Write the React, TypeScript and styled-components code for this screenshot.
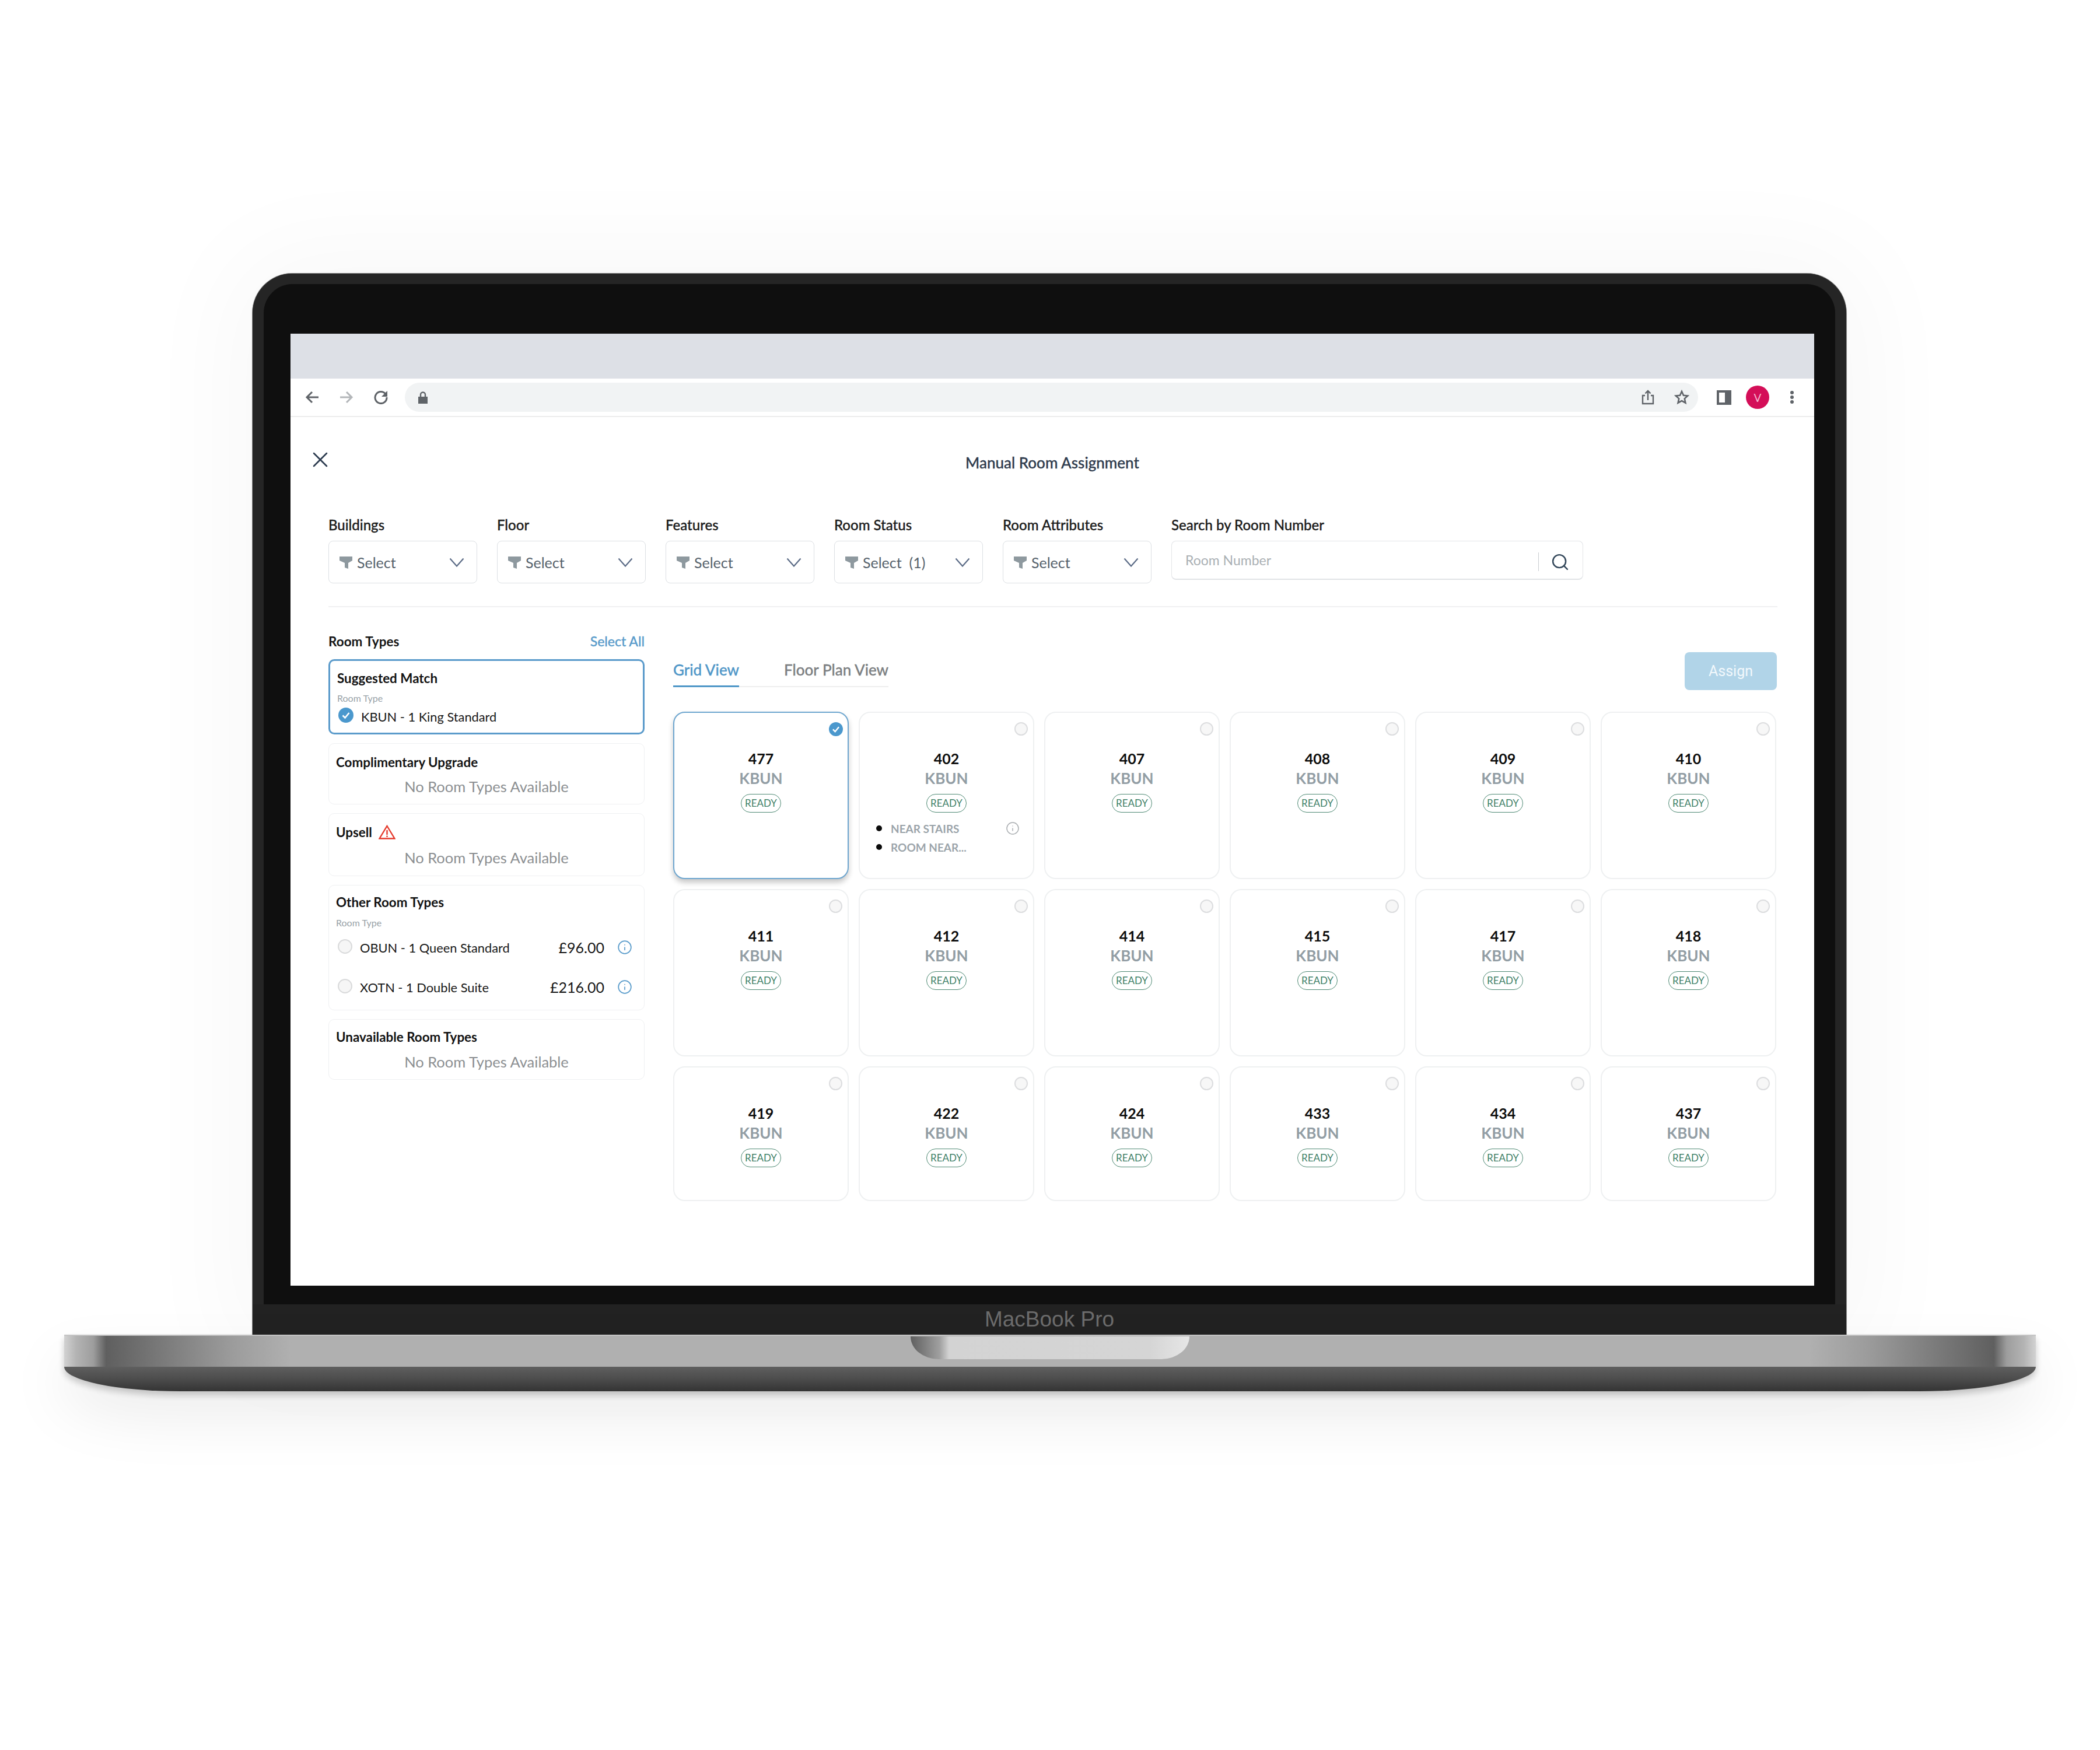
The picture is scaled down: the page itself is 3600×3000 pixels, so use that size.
import React from "react";
import styled, { createGlobalStyle } from "styled-components";
import { Info, Search, X } from "lucide-react";

const Global = createGlobalStyle`
  html, body { margin: 0; padding: 0; background: #fff; }
  * { box-sizing: border-box; }
  body { font-family: Lato, "Open Sans", "Liberation Sans", sans-serif; }
`;

const Page = styled.div`
  width: 3600px;
  height: 3000px;
  padding-top: 469px;
  display: flex;
  flex-direction: column;
  align-items: center;
  background: #fff;
  overflow: hidden;
`;

const Lid = styled.div`
  width: 2732px;
  height: 1819px;
  margin-left: -2px;
  display: flex;
  flex-direction: column;
  border-radius: 68px 68px 0 0;
  background: #252525;
  box-shadow: 0 0 0 1px #8d8d8d, 0 0 180px 40px rgba(0, 0, 0, 0.03);
`;

const Bezel = styled.div`
  flex: 1;
  min-height: 0;
  display: flex;
  padding: 85px 36px 32px 46px;
  background: #0f0f0f;
  border: solid #252525;
  border-width: 18px 19px 0 19px;
  border-radius: 68px 68px 0 0;
`;

const Chin = styled.div`
  height: 52px;
  display: flex;
  align-items: center;
  justify-content: center;
  background: #222;
`;

const ChinLabel = styled.span`
  font-family: "Liberation Sans", Arial, sans-serif;
  font-size: 37px;
  color: #6c6c6c;
`;

const Base = styled.div`
  width: 3380px;
  display: flex;
  flex-direction: column;
  filter: drop-shadow(0 7px 6px rgba(0, 0, 0, 0.2)) drop-shadow(0 45px 45px rgba(0, 0, 0, 0.07));
`;

const BaseTop = styled.div`
  height: 55px;
  display: flex;
  justify-content: center;
  border-top: 2px solid #c4c4c4;
  background: linear-gradient(
    90deg,
    #d2d2d2 0,
    #b4b4b4 20px,
    #9d9d9d 50px,
    #5f5f5f 72px,
    #808080 190px,
    #9c9c9c 290px,
    #b0b0b0 390px,
    #b0b0b0 2990px,
    #9c9c9c 3090px,
    #808080 3190px,
    #5f5f5f 3308px,
    #9d9d9d 3330px,
    #b4b4b4 3360px,
    #d2d2d2 3380px
  );
`;

const Notch = styled.div`
  width: 478px;
  height: 39px;
  margin-top: 1px;
  border-radius: 0 0 48px 48px / 0 0 39px 39px;
  background: linear-gradient(90deg, #5f5f5f 0, #a0a0a0 50px, #d3d3d3 66px, #d5d5d5 410px, #e6e6e6 478px);
`;

const BaseBottom = styled.div`
  height: 42px;
  border-radius: 0 0 200px 200px / 0 0 42px 42px;
  background: linear-gradient(180deg, #5f5f5f 0, #4c4c4c 50%, #343434 100%);
`;

const Screen = styled.div`
  flex: 1;
  min-width: 0;
  display: flex;
  flex-direction: column;
  background: #fff;
  overflow: hidden;
`;

const TabStrip = styled.div`
  height: 77px;
  background: #dde0e6;
`;

const Toolbar = styled.div`
  height: 66px;
  display: flex;
  align-items: center;
  padding: 0 0 0 25px;
  border-bottom: 2px solid #ececec;
`;

const NavIcon = styled.svg`
  width: 24px;
  height: 24px;
  flex: none;
  margin-right: 35px;
`;

const Omnibox = styled.div`
  width: 2217px;
  height: 50px;
  margin: 0 32px 0 -6px;
  padding: 0 15px 0 18px;
  display: flex;
  align-items: center;
  border-radius: 25px;
  background: #f1f3f4;
`;

const OmniIcon = styled.svg<{ $gap?: number }>`
  width: 26px;
  height: 26px;
  flex: none;
  margin-right: ${(p) => p.$gap ?? 0}px;
`;

const Spacer = styled.div`
  flex: 1;
`;

const SidePanel = styled.div`
  width: 25px;
  height: 25px;
  border: 4px solid #5f6368;
  border-right-width: 11px;
  background: #fff;
  margin-right: 25px;
`;

const Avatar = styled.div`
  width: 40px;
  height: 40px;
  display: flex;
  align-items: center;
  justify-content: center;
  border-radius: 50%;
  background: #d40e58;
  color: #f6b6cf;
  font-size: 19px;
  margin-right: 36px;
`;

const Dots = styled.div`
  display: flex;
  flex-direction: column;
  gap: 2px;
`;

const Dot = styled.span`
  width: 6px;
  height: 6px;
  border-radius: 50%;
  background: #5f6368;
`;

const Header = styled.div`
  height: 173px;
  display: grid;
  grid-template-columns: 1fr auto 1fr;
  align-items: start;
  padding: 0 40px;
`;

const CloseButton = styled(X)`
  margin: 51px 0 0 -11px;
  color: #2b3a4e;
`;

const Title = styled.h1`
  margin: 63px 0 0;
  font-size: 26px;
  line-height: 30px;
  font-weight: 500;
  color: #2f3b4d;
  -webkit-text-stroke: 0.3px #2f3b4d;
`;

const Main = styled.div`
  padding: 0 63px 0 65px;
`;

const Filters = styled.div`
  display: flex;
  gap: 34px;
  padding-bottom: 39px;
  border-bottom: 2px solid #f0f1f2;
`;

const Field = styled.div`
  display: flex;
  flex-direction: column;
  gap: 15px;
`;

const FieldLabel = styled.label`
  font-size: 24px;
  line-height: 24px;
  font-weight: 500;
  color: #1c1c1c;
  -webkit-text-stroke: 0.3px #1c1c1c;
`;

const SelectBox = styled.div`
  width: 255px;
  height: 73px;
  display: flex;
  align-items: center;
  padding: 0 21px 0 18px;
  border: 1px solid #dcdfe3;
  border-radius: 8px;
  background: #fff;
`;

const FunnelIcon = styled.svg`
  width: 22px;
  height: 24px;
  flex: none;
  margin-right: 8px;
`;

const SelectText = styled.span`
  flex: 1;
  font-size: 25px;
  color: #56626c;
  white-space: pre;
`;

const ChevronIcon = styled.svg`
  width: 26px;
  height: 16px;
  flex: none;
`;

const SearchBox = styled.div`
  width: 706px;
  height: 67px;
  display: flex;
  align-items: center;
  padding: 0 22px 0 23px;
  border: 1px solid #e3e5e8;
  border-bottom: 2px solid #e1e3e6;
  border-radius: 8px;
`;

const Placeholder = styled.span`
  flex: 1;
  font-size: 23px;
  color: #aab0b4;
`;

const SearchDivider = styled.span`
  width: 1px;
  height: 32px;
  margin: 6px 20px 0 0;
  background: #c9cdd0;
`;

const SearchIcon = styled(Search)`
  flex: none;
  margin-top: 6px;
  color: #33475a;
`;

const Body = styled.div`
  display: flex;
  gap: 49px;
  padding-top: 46px;
`;

const Sidebar = styled.div`
  width: 542px;
  flex: none;
  display: flex;
  flex-direction: column;
`;

const SidebarHead = styled.div`
  display: flex;
  justify-content: space-between;
  align-items: center;
  height: 24px;
  margin-bottom: 19px;
`;

const SidebarTitle = styled.span`
  font-size: 22.500px;
  font-weight: 700;
  color: #161616;
`;

const SelectAll = styled.span`
  font-size: 23px;
  font-weight: 500;
  color: #5a9ccb;
  -webkit-text-stroke: 0.3px #5a9ccb;
`;

const Groups = styled.div`
  display: flex;
  flex-direction: column;
  gap: 15px;
`;

const Group = styled.div<{ $height: number; $top: number; $active?: boolean }>`
  height: ${(p) => p.$height}px;
  padding: ${(p) => p.$top}px 12px 0;
  border: ${(p) => (p.$active ? "3px solid #5b9bcb" : "1px solid #eff0f2")};
  border-radius: 10px;
  background: #fff;
`;

const GroupTitle = styled.div<{ $gap?: number }>`
  display: flex;
  align-items: center;
  gap: 11px;
  height: 28px;
  margin-bottom: ${(p) => p.$gap ?? 12}px;
  font-size: 22.400px;
  font-weight: 700;
  color: #121212;
`;

const Message = styled.div`
  height: 32px;
  line-height: 32px;
  text-align: center;
  font-size: 25.500px;
  color: #8c8f92;
`;

const SmallLabel = styled.div`
  height: 20px;
  line-height: 20px;
  font-size: 16px;
  color: #98a2a8;
`;

const OptionRow = styled.div<{ $top: number }>`
  display: flex;
  align-items: center;
  height: 30px;
  margin-top: ${(p) => p.$top}px;
  font-size: 21.800px;
  color: #181818;
`;

const CheckIcon = styled.svg`
  width: 26px;
  height: 26px;
  flex: none;
  margin: -4px 13px 0 2px;
`;

const ListRadio = styled.span`
  width: 25px;
  height: 25px;
  flex: none;
  margin: -4px 13px 0 3px;
  border-radius: 50%;
  border: 2px solid #d9dadb;
  background: #f6f6f6;
`;

const Price = styled.span`
  margin-left: auto;
  font-size: 25px;
`;

const PriceInfo = styled(Info)`
  flex: none;
  margin: 0 8px 0 22px;
  color: #5a9ccb;
`;

const Content = styled.div`
  flex: 1;
  min-width: 0;
  margin-top: 31px;
`;

const ContentHead = styled.div`
  display: flex;
  justify-content: space-between;
  align-items: flex-start;
  padding-right: 1px;
`;

const Tabs = styled.div`
  display: flex;
  gap: 77px;
  border-bottom: 2px solid #eeeeee;
  padding-top: 15px;
`;

const Tab = styled.div<{ $active?: boolean }>`
  height: 45px;
  line-height: 30px;
  margin-bottom: -2px;
  font-size: 26px;
  font-weight: 500;
  color: ${(p) => (p.$active ? "#5097c8" : "#7c7f82")};
  -webkit-text-stroke: 0.3px ${(p) => (p.$active ? "#5097c8" : "#7c7f82")};
  border-bottom: ${(p) => (p.$active ? "3px solid #5097c8" : "none")};
`;

const AssignButton = styled.button`
  width: 158px;
  height: 65px;
  border: none;
  border-radius: 8px;
  background: #b1d4e8;
  color: #f2f8fc;
  font-family: Roboto, "Liberation Sans", sans-serif;
  font-size: 25px;
`;

const RoomGrid = styled.div`
  display: grid;
  grid-template-columns: repeat(6, 301px);
  grid-template-rows: 287px 287px 231px;
  gap: 17px;
  margin-top: 37px;
`;

const RoomCard = styled.div<{ $selected?: boolean }>`
  position: relative;
  display: flex;
  flex-direction: column;
  align-items: center;
  padding-top: 63px;
  border: 2px solid ${(p) => (p.$selected ? "#6ea6cf" : "#eef0f1")};
  border-radius: 20px;
  background: #fff;
  box-shadow: ${(p) => (p.$selected ? "0 6px 10px rgba(0, 0, 0, 0.22)" : "none")};
`;

const RoomRadio = styled.span`
  position: absolute;
  top: 16px;
  right: 9px;
  width: 23px;
  height: 23px;
  border-radius: 50%;
  border: 2px solid #dcdddf;
  background: #f7f7f7;
`;

const RoomCheck = styled.svg`
  position: absolute;
  top: 16px;
  right: 8px;
  width: 24px;
  height: 24px;
`;

const RoomNumber = styled.div`
  height: 30px;
  line-height: 30px;
  font-size: 25px;
  font-weight: 700;
  color: #0c0c0c;
`;

const RoomType = styled.div`
  height: 30px;
  line-height: 30px;
  margin-top: 4px;
  font-size: 26px;
  font-weight: 700;
  color: #929da4;
`;

const Badge = styled.div`
  width: 69px;
  height: 32px;
  line-height: 29px;
  margin-top: 12px;
  text-align: center;
  font-size: 17px;
  color: #3f8068;
  border: 1.500px solid #4f8a74;
  border-radius: 16px;
`;

const Features = styled.ul`
  align-self: stretch;
  list-style: none;
  margin: 11px 0 0;
  padding: 0 23px 0 28px;
`;

const Feature = styled.li`
  display: flex;
  align-items: center;
  gap: 15px;
  height: 32px;
  font-size: 19px;
  font-weight: 700;
  color: #9ba4aa;
`;

const Bullet = styled.span`
  width: 10px;
  height: 10px;
  border-radius: 50%;
  background: #0b0b0b;
`;

const FeatureInfo = styled(Info)`
  margin-left: auto;
  color: #a9adb0;
`;

const filters = ["Buildings", "Floor", "Features", "Room Status", "Room Attributes"];
const rooms = [
  477, 402, 407, 408, 409, 410, 411, 412, 414, 415, 417, 418, 419, 422, 424, 433, 434, 437,
];

const Funnel = () => (
  <FunnelIcon viewBox="0 0 22 24" aria-hidden>
    <path d="M0 2h22v7l-7 4v10l-6-2v-8L0 9z" fill="#8e999f" />
  </FunnelIcon>
);

const Chevron = () => (
  <ChevronIcon viewBox="0 0 26 16" aria-hidden>
    <path d="M1.500 1.500 13 14.500 24.500 1.500" fill="none" stroke="#5b6b86" strokeWidth="2.200" />
  </ChevronIcon>
);

const CheckMark = () => (
  <>
    <circle cx="13" cy="13" r="13" fill="#4b98cd" />
    <path d="M7.500 13.500l4 4 7-8.500" fill="none" stroke="#fff" strokeWidth="2.600" />
  </>
);

export default function App() {
  return (
    <Page>
      <Global />
      <Lid>
        <Bezel>
          <Screen>
            <TabStrip />
            <Toolbar>
              <NavIcon viewBox="0 0 24 24" fill="none" stroke="#5f6368" strokeWidth="3">
                <path d="M23 12H3M12 3l-9 9 9 9" />
              </NavIcon>
              <NavIcon viewBox="0 0 24 24" fill="none" stroke="#b3b6b9" strokeWidth="3">
                <path d="M1 12h20M12 3l9 9-9 9" />
              </NavIcon>
              <NavIcon viewBox="0 0 24 24" fill="none" stroke="#5f6368" strokeWidth="3">
                <path d="M20 6.500A10 10 0 1 0 22 12" />
                <path d="M23 1v10H13z" fill="#5f6368" stroke="none" />
              </NavIcon>
              <Omnibox>
                <OmniIcon viewBox="0 0 26 26">
                  <path d="M5 12h16v12H5z" fill="#5f6368" />
                  <path d="M9 12V8.500a4 4 0 0 1 8 0V12" fill="none" stroke="#5f6368" strokeWidth="2.400" />
                </OmniIcon>
                <Spacer />
                <OmniIcon viewBox="0 0 26 26" fill="none" stroke="#5f6368" strokeWidth="2.400" $gap={32}>
                  <path d="M8 10H4v14h18V10h-4M13 18V2M8.500 6.500 13 2l4.500 4.500" />
                </OmniIcon>
                <OmniIcon viewBox="0 0 26 26" fill="none" stroke="#5f6368" strokeWidth="2.600">
                  <path d="M13 3l3 6.800 7.300.7-5.500 4.900 1.600 7.200L13 19l-6.400 3.600 1.600-7.200L2.700 10.500 10 9.800z" />
                </OmniIcon>
              </Omnibox>
              <SidePanel />
              <Avatar>V</Avatar>
              <Dots>
                <Dot />
                <Dot />
                <Dot />
              </Dots>
            </Toolbar>
            <Header>
              <CloseButton size={44} strokeWidth={1.400} />
              <Title>Manual Room Assignment</Title>
            </Header>
            <Main>
              <Filters>
                {filters.map((f) => (
                  <Field key={f}>
                    <FieldLabel>{f}</FieldLabel>
                    <SelectBox>
                      <Funnel />
                      <SelectText>{f === "Room Status" ? "Select  (1)" : "Select"}</SelectText>
                      <Chevron />
                    </SelectBox>
                  </Field>
                ))}
                <Field>
                  <FieldLabel>Search by Room Number</FieldLabel>
                  <SearchBox>
                    <Placeholder>Room Number</Placeholder>
                    <SearchDivider />
                    <SearchIcon size={33} strokeWidth={1.800} />
                  </SearchBox>
                </Field>
              </Filters>
              <Body>
                <Sidebar>
                  <SidebarHead>
                    <SidebarTitle>Room Types</SidebarTitle>
                    <SelectAll>Select All</SelectAll>
                  </SidebarHead>
                  <Groups>
                    <Group $height={129} $top={15} $active>
                      <GroupTitle $gap={11}>Suggested Match</GroupTitle>
                      <SmallLabel>Room Type</SmallLabel>
                      <OptionRow $top={6}>
                        <CheckIcon viewBox="0 0 26 26">
                          <CheckMark />
                        </CheckIcon>
                        KBUN - 1 King Standard
                      </OptionRow>
                    </Group>
                    <Group $height={105} $top={17}>
                      <GroupTitle>Complimentary Upgrade</GroupTitle>
                      <Message>No Room Types Available</Message>
                    </Group>
                    <Group $height={108} $top={17}>
                      <GroupTitle $gap={14}>
                        Upsell
                        <svg width="29" height="25" viewBox="0 0 29 25" fill="none">
                          <path d="M14.500 2 27.500 23.500h-26z" stroke="#e5392b" strokeWidth="2.400" />
                          <path d="M14.500 9v8M14.500 18.500v2.500" stroke="#e5392b" strokeWidth="2.400" />
                        </svg>
                      </GroupTitle>
                      <Message>No Room Types Available</Message>
                    </Group>
                    <Group $height={215} $top={14}>
                      <GroupTitle>Other Room Types</GroupTitle>
                      <SmallLabel>Room Type</SmallLabel>
                      <OptionRow $top={17}>
                        <ListRadio />
                        OBUN - 1 Queen Standard
                        <Price>£96.00</Price>
                        <PriceInfo size={26} strokeWidth={1.600} />
                      </OptionRow>
                      <OptionRow $top={38}>
                        <ListRadio />
                        XOTN - 1 Double Suite
                        <Price>£216.00</Price>
                        <PriceInfo size={26} strokeWidth={1.600} />
                      </OptionRow>
                    </Group>
                    <Group $height={104} $top={15}>
                      <GroupTitle $gap={13}>Unavailable Room Types</GroupTitle>
                      <Message>No Room Types Available</Message>
                    </Group>
                  </Groups>
                </Sidebar>
                <Content>
                  <ContentHead>
                    <Tabs>
                      <Tab $active>Grid View</Tab>
                      <Tab>Floor Plan View</Tab>
                    </Tabs>
                    <AssignButton>Assign</AssignButton>
                  </ContentHead>
                  <RoomGrid>
                    {rooms.map((room, i) => (
                      <RoomCard key={room} $selected={i === 0}>
                        {i === 0 ? (
                          <RoomCheck viewBox="0 0 26 26">
                            <CheckMark />
                          </RoomCheck>
                        ) : (
                          <RoomRadio />
                        )}
                        <RoomNumber>{room}</RoomNumber>
                        <RoomType>KBUN</RoomType>
                        <Badge>READY</Badge>
                        {room === 402 && (
                          <Features>
                            <Feature>
                              <Bullet />
                              NEAR STAIRS
                              <FeatureInfo size={24} strokeWidth={1.500} />
                            </Feature>
                            <Feature>
                              <Bullet />
                              ROOM NEAR...
                            </Feature>
                          </Features>
                        )}
                      </RoomCard>
                    ))}
                  </RoomGrid>
                </Content>
              </Body>
            </Main>
          </Screen>
        </Bezel>
        <Chin>
          <ChinLabel>MacBook Pro</ChinLabel>
        </Chin>
      </Lid>
      <Base>
        <BaseTop>
          <Notch />
        </BaseTop>
        <BaseBottom />
      </Base>
    </Page>
  );
}
